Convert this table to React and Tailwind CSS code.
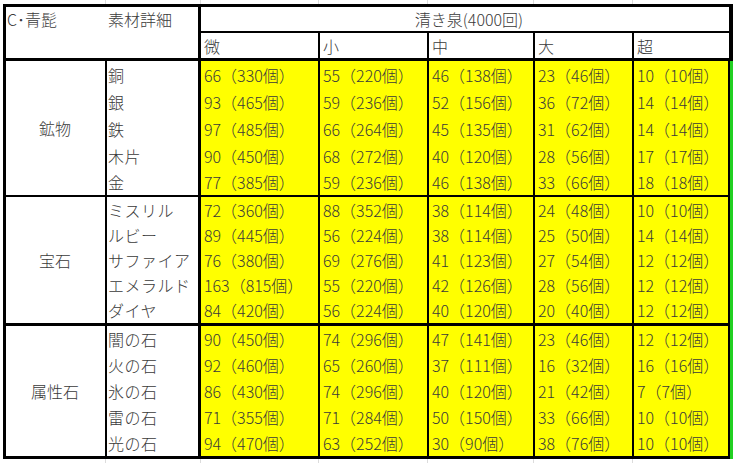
import React from "react";

const COLS = ["w-[119px]", "w-[109px]", "w-[106px]", "w-[99px]", "w-[96px]"];

const GROUPS = [
  {
    label: "鉱物",
    border: "border-b-2 border-black",
    rows: [
      ["h-[27px]", "銅", ["66（330個）", "55（220個）", "46（138個）", "23（46個）", "10（10個）"]],
      ["h-[27px]", "銀", ["93（465個）", "59（236個）", "52（156個）", "36（72個）", "14（14個）"]],
      ["h-[27px]", "鉄", ["97（485個）", "66（264個）", "45（135個）", "31（62個）", "14（14個）"]],
      ["h-[27px]", "木片", ["90（450個）", "68（272個）", "40（120個）", "28（56個）", "17（17個）"]],
      ["h-[26px]", "金", ["77（385個）", "59（236個）", "46（138個）", "33（66個）", "18（18個）"]],
    ],
  },
  {
    label: "宝石",
    border: "border-b-[3px] border-black",
    rows: [
      ["h-[25px]", "ミスリル", ["72（360個）", "88（352個）", "38（114個）", "24（48個）", "10（10個）"]],
      ["h-[25px]", "ルビー", ["89（445個）", "56（224個）", "38（114個）", "25（50個）", "14（14個）"]],
      ["h-[25px]", "サファイア", ["76（380個）", "69（276個）", "41（123個）", "27（54個）", "12（12個）"]],
      ["h-[25px]", "エメラルド", ["163（815個）", "55（220個）", "42（126個）", "28（56個）", "12（12個）"]],
      ["h-[26px]", "ダイヤ", ["84（420個）", "56（224個）", "40（120個）", "20（40個）", "12（12個）"]],
    ],
  },
  {
    label: "属性石",
    border: "border-b-[3px] border-black",
    rows: [
      ["h-[26px]", "闇の石", ["90（450個）", "74（296個）", "47（141個）", "23（46個）", "12（12個）"]],
      ["h-[26px]", "火の石", ["92（460個）", "65（260個）", "37（111個）", "16（32個）", "16（16個）"]],
      ["h-[26px]", "氷の石", ["86（430個）", "74（296個）", "40（120個）", "21（42個）", "7（7個）"]],
      ["h-[26px]", "雷の石", ["71（355個）", "71（284個）", "50（150個）", "33（66個）", "10（10個）"]],
      ["h-[26px]", "光の石", ["94（470個）", "63（252個）", "30（90個）", "38（76個）", "10（10個）"]],
    ],
  },
];

function GridStrip() {
  return (
    <div className="flex h-[4px]">
      <div className="w-[106px] border-r border-[#dcdcdc]" />
      <div className="w-[95px] border-r border-[#dcdcdc]" />
      <div className="w-[118px] border-r border-[#dcdcdc]" />
      <div className="w-[109px] border-r border-[#dcdcdc]" />
      <div className="w-[106px] border-r border-[#dcdcdc]" />
      <div className="w-[99px] border-r border-[#dcdcdc]" />
      <div className="flex-1" />
    </div>
  );
}

export default function App() {
  return (
    <div className="w-[733px] h-[463px] overflow-hidden bg-white text-[16px] font-light leading-none text-[#3a3a3a] font-['Noto_Sans_CJK_JP','Noto_Sans_CJK_SC',sans-serif]">
      <GridStrip />
      <div className="flex">
        <div className="w-[3px]" />
        <div className="flex w-[730px] flex-col">
          {/* header */}
          <div className="flex border-y-[3px] border-l-[3px] border-black">
            <div className="flex w-[195px] border-r-[3px] border-black">
              <div className="flex h-[24px] w-[101px] items-center pl-[1px]">C･青髭</div>
              <div className="flex h-[24px] flex-1 items-center pl-[1px]">素材詳細</div>
            </div>
            <div className="flex flex-1 flex-col border-r-4 border-black">
              <div className="flex h-[26px] items-center justify-center border-b-2 border-black pl-[8px]">
                清き泉(4000回)
              </div>
              <div className="flex h-[25px]">
                {["微", "小", "中", "大"].map((t, i) => (
                  <div key={t} className={`${COLS[i]} flex items-center border-r-2 border-black pl-[3px]`}>
                    {t}
                  </div>
                ))}
                <div className="flex flex-1 items-center pl-[3px]">超</div>
              </div>
            </div>
          </div>
          {/* data */}
          <div className="flex">
            <div className="flex w-[727px] flex-col border-l-[3px] border-black">
              {GROUPS.map((g) => (
                <div key={g.label} className={`flex ${g.border}`}>
                  <div className="flex w-[101px] items-center justify-center border-r-2 border-black pr-[1px]">
                    {g.label}
                  </div>
                  <div className="flex flex-1 flex-col">
                    {g.rows.map(([h, name, vals]) => (
                      <div key={name} className={`flex ${h}`}>
                        <div className="flex w-[94px] items-center border-r-[3px] border-black pl-[1px] tracking-[0.5px]">
                          {name}
                        </div>
                        {vals.map((v, i) => (
                          <div
                            key={i}
                            className={`${COLS[i]} flex items-center border-r-2 border-black bg-[#ffff00] pl-[3px]`}
                          >
                            {v}
                          </div>
                        ))}
                      </div>
                    ))}
                  </div>
                </div>
              ))}
            </div>
            <div className="w-[3px] bg-[#22d022]" />
          </div>
        </div>
      </div>
      <GridStrip />
    </div>
  );
}
